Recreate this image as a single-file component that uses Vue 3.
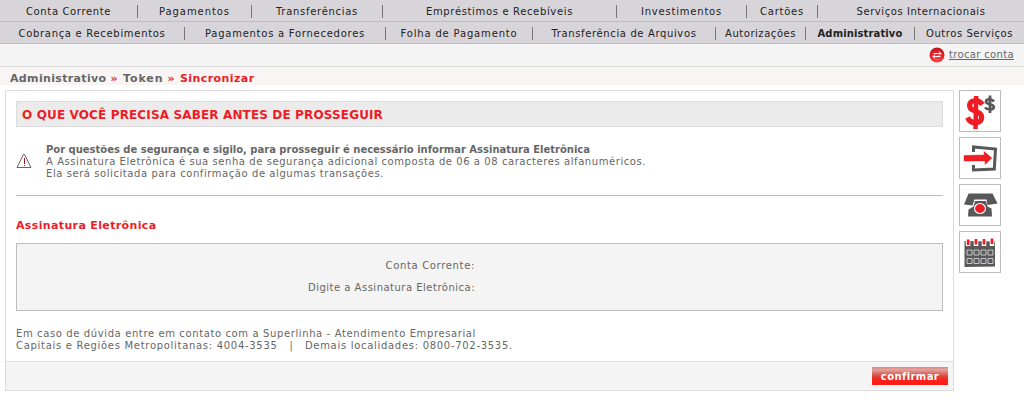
<script setup>
const rows = [
  {
    columns: '138px 114px 131px 234px 130px 71px 206px',
    items: [
      { text: 'Conta Corrente', width: 85 },
      { text: 'Pagamentos', width: 71 },
      { text: 'Transferências', width: 82 },
      { text: 'Empréstimos e Recebíveis', width: 147 },
      { text: 'Investimentos', width: 81 },
      { text: 'Cartões', width: 44 },
      { text: 'Serviços Internacionais', width: 129 },
    ],
  },
  {
    columns: '185px 201px 147px 183px 90px 109px 109px',
    items: [
      { text: 'Cobrança e Recebimentos', width: 147 },
      { text: 'Pagamentos a Fornecedores', width: 160 },
      { text: 'Folha de Pagamento', width: 117 },
      { text: 'Transferência de Arquivos', width: 145 },
      { text: 'Autorizações', width: 71 },
      { text: 'Administrativo', width: 85, active: true },
      { text: 'Outros Serviços', width: 87 },
    ],
  },
]

// Tracks a line of text so that it spans the given width.
const vFit = {
  mounted(el, { value }) {
    const natural = el.getBoundingClientRect().width
    el.style.letterSpacing = `${(value - natural) / el.textContent.length}px`
  },
}
</script>

<template>
  <div class="page">
    <nav>
      <div v-for="(row, r) in rows" :key="r" class="nav-row" :style="{ gridTemplateColumns: row.columns }">
        <a v-for="item in row.items" :key="item.text" class="nav-item" :class="{ active: item.active }">
          <span v-fit="item.width" class="t">{{ item.text }}</span>
        </a>
      </div>
    </nav>

    <div class="account">
      <svg width="16" height="16" viewBox="0 0 16 16">
        <defs>
          <radialGradient id="ball" cx=".5" cy=".85" r=".8">
            <stop offset="0" stop-color="#ff4a4a" />
            <stop offset=".55" stop-color="#e8252c" />
            <stop offset="1" stop-color="#c01820" />
          </radialGradient>
        </defs>
        <circle cx="8" cy="8" r="7.5" fill="url(#ball)" />
        <path d="M4.500 6.500h7.500M10 4.500 12 6.500 10 8.500M11.500 9.500H4M6 7.500 4 9.500 6 11.500" fill="none" stroke="#fff" stroke-width="1" />
      </svg>
      <a v-fit="65" class="t switch">trocar conta</a>
    </div>

    <div class="crumbs">
      <span v-fit="96.5" class="t">Administrativo</span>
      <span v-fit="8.5" class="t red">»</span>
      <span v-fit="40.5" class="t">Token</span>
      <span v-fit="8.5" class="t red">»</span>
      <span v-fit="74.5" class="t red">Sincronizar</span>
    </div>

    <div class="body">
      <main class="panel">
        <div class="content">
          <h1><span v-fit="361" class="t">O QUE VOCÊ PRECISA SABER ANTES DE PROSSEGUIR</span></h1>
          <div class="notice">
            <svg width="16" height="16" viewBox="0 0 16 16">
              <path d="M7.500 1.500 1 14.500h14L8.500 1.500z" fill="#fff" stroke="#666" stroke-width="1" />
              <path d="M8.500 5v6M8.500 12v1" stroke="#a01018" stroke-width="1" />
            </svg>
            <div class="lines">
              <strong v-fit="544" class="t">Por questões de segurança e sigilo, para prosseguir é necessário informar Assinatura Eletrônica</strong>
              <span v-fit="600" class="t">A Assinatura Eletrônica é sua senha de segurança adicional composta de 06 a 08 caracteres alfanuméricos.</span>
              <span v-fit="338" class="t">Ela será solicitada para confirmação de algumas transações.</span>
            </div>
          </div>
          <h2><span v-fit="140.5" class="t">Assinatura Eletrônica</span></h2>
          <div class="form">
            <span v-fit="89.5" class="t">Conta Corrente:</span>
            <span v-fit="167" class="t">Digite a Assinatura Eletrônica:</span>
          </div>
          <div class="lines help">
            <span v-fit="460" class="t">Em caso de dúvida entre em contato com a Superlinha - Atendimento Empresarial</span>
            <div class="phones">
              <span v-fit="261.5" class="t">Capitais e Regiões Metropolitanas: 4004-3535</span>
              <span class="t">|</span>
              <span v-fit="208" class="t">Demais localidades: 0800-702-3535.</span>
            </div>
          </div>
        </div>
        <footer>
          <button type="button"><span v-fit="58" class="t">confirmar</span></button>
        </footer>
      </main>

      <aside>
        <a class="tool">
          <svg viewBox="0 0 40 40">
            <g fill="none">
              <path d="M22.500 13.500C20 9.800 17 9.300 13.500 10C8.500 11 8.500 17 12.500 18.800L18.500 21.500C23.500 24 22 30.500 17.500 31.500C13 32.500 9.500 30.500 7.500 26.500" stroke="#ee1c25" stroke-width="5.200" />
              <path d="M16.200 5 15.500 38" stroke="#ee1c25" stroke-width="4.500" />
              <path d="M34 10.500C32 7.800 26 7.500 26 10.800C26 14 33.800 12.500 33.800 16C33.800 19.300 27 19 25 16.500" stroke="#58585a" stroke-width="2.700" />
              <path d="M30 4.500v17.500" stroke="#58585a" stroke-width="2.800" />
            </g>
          </svg>
        </a>
        <a class="tool">
          <svg viewBox="0 0 40 40">
            <path d="M13.500 14V9L35.500 11 34.300 31 13.500 32V27" fill="none" stroke="#58585a" stroke-width="3" />
            <path d="M3.500 17 23.500 16.500V12.500L32.500 20 24.500 27.500V23.500L3.500 23.500z" fill="#ee1c25" stroke="#fff" stroke-width=".6" />
          </svg>
        </a>
        <a class="tool">
          <svg viewBox="0 0 40 40">
            <path d="M8.500 8.500H32.500L37.500 18.500 27.500 20 26.500 14.500H14.500L12.500 20.500 4 19.500z" fill="#58585a" />
            <path d="M15 16H26L27.500 21.500 31.500 23.500 32 31.500H8L8.500 24.500 13.500 21.500z" fill="#58585a" />
            <ellipse cx="20" cy="23.500" rx="6" ry="5.500" fill="#fff" />
            <ellipse cx="20" cy="23.500" rx="4.900" ry="4.400" fill="#ee1c25" />
          </svg>
        </a>
        <a class="tool">
          <svg viewBox="0 0 40 40">
            <path d="M4.500 9 35 9.500V34.500L4.500 35z" fill="#58585a" />
            <path d="M5.800 6h4.600v8H5.800zM13.700 6h4.600v8h-4.600zM21.700 6h4.600v8h-4.600zM29.700 6h4.600v8h-4.600z" fill="#fff" />
            <path d="M8.200 7.500v5.500M16 7v5.500M24 7v5.500M32 6.500v5.500" stroke="#ee1c25" stroke-width="2.700" />
            <path d="M7 18h5v5H7zM14 18h5v5h-5zM21 18h5v5h-5zM28 18h5v5h-5zM7 26.500h5v5H7zM14 26.500h5v5h-5zM21 26.500h5v5h-5zM28 26.500h5v5h-5z" fill="none" stroke="#c8c8c8" stroke-width="1" />
          </svg>
        </a>
      </aside>
    </div>
  </div>
</template>

<style>
body { background: #fff; }
</style>

<style scoped>
.page {
  box-sizing: border-box;
  width: 1024px;
  height: 400px;
  overflow: hidden;
  background: #fff;
  color: #666;
  font: 10px/12px "DejaVu Sans", Verdana, sans-serif;
}
.page *, .page *::before { box-sizing: border-box; }
.t { display: inline-block; white-space: pre; }
.nav-row {
  display: grid;
  height: 22px;
  border-bottom: 1px solid #c0bdc8;
  background: #d8d5da;
  color: #222;
  align-items: start;
}
.nav-item {
  display: flex;
  justify-content: center;
  height: 13px;
  margin-top: 5px;
  padding: 1px 0 0;
  border-right: 1px solid #777;
}
.nav-item:last-child { border-right: 0; }
.active { font-weight: bold; }
.account {
  display: flex;
  justify-content: flex-end;
  gap: 4px;
  height: 23px;
  padding: 3px 10px 0 0;
  border-bottom: 1px solid #dcdcdc;
  background: #f4f4f4;
}
.switch { height: 11px; margin-top: 2px; border-bottom: 1px solid #666; }
.crumbs {
  display: flex;
  gap: 4px;
  height: 18px;
  padding: 6px 0 0 10px;
  background: #f9f5f4;
  font-size: 11px;
  font-weight: bold;
}
.red { color: #ee1c25; }
.body { display: flex; gap: 5px; padding: 5px 0 0 5px; }
.panel {
  display: flex;
  flex-direction: column;
  width: 949px;
  height: 301px;
  border: 1px solid #dcdcdc;
}
.content { flex: 1; padding: 10px 10px 0; }
h1 {
  height: 26px;
  margin: 0;
  padding: 6px 0 0 5px;
  border: 1px solid #dcdcdc;
  background: #ebebeb;
  color: #ee1c25;
  font-size: 12px;
  line-height: 14px;
}
.notice {
  display: flex;
  align-items: flex-start;
  gap: 14px;
  height: 69px;
  padding-top: 17px;
  border-bottom: 1px solid #bdbdbd;
}
.notice svg { margin-top: 9px; }
.lines { display: flex; flex-direction: column; align-items: flex-start; }
h2 {
  height: 47px;
  margin: 0;
  padding-top: 24px;
  color: #ee1c25;
  font-size: 11px;
}
h2 .t { display: block; width: max-content; }
.form {
  display: flex;
  flex-direction: column;
  align-items: flex-end;
  gap: 10px;
  height: 68px;
  padding: 16px 467px 0 0;
  border: 1px solid #bdbdbd;
  background: #f4f4f4;
}
.help { padding-top: 17px; }
.phones { display: flex; gap: 12px; }
footer {
  display: flex;
  justify-content: flex-end;
  height: 29px;
  padding: 5px 5px 0 0;
  border-top: 1px solid #dcdcdc;
  background: #f4f4f4;
}
button {
  width: 76px;
  height: 18px;
  padding: 2px 0 0;
  border: 0;
  background: linear-gradient(#d9837f 0, #e2a3a0 15%, #d9695f 38%, #e6362d 58%, #ff2018 75%, #ff1c16 100%);
  color: #fff;
  font: bold 10px/12px "DejaVu Sans", Verdana, sans-serif;
}
aside { display: flex; flex-direction: column; gap: 5px; }
.tool { width: 42px; height: 42px; border: 1px solid #bdbdbd; }
.tool svg { display: block; width: 40px; height: 40px; }
</style>
